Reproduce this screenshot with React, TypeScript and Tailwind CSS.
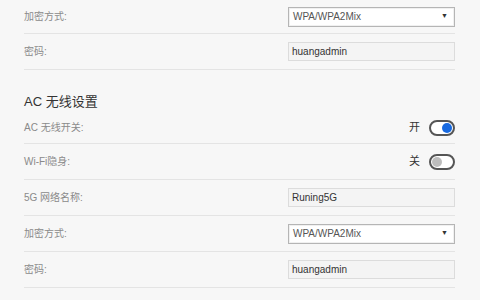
import React from "react";

const font = { fontFamily: '"Liberation Sans", "Noto Sans CJK SC", sans-serif' };

function Row({ label, h, children }: { label: string; h: string; children?: React.ReactNode }) {
  return (
    <div className={`flex items-center justify-between border-b border-[#e4e4e4] ${h}`}>
      <span className="text-[10px] text-[#8a8a8a]">{label}</span>
      {children}
    </div>
  );
}

function Select({ value }: { value: string }) {
  return (
    <div className="flex h-[20px] w-[167px] items-center justify-between border border-[#b5b5b5] bg-white pl-[4px] pr-[6px] text-[10px] text-[#555] shadow-[inset_0_0_0_1px_#f0f0f0]">
      <span>{value}</span>
      <span className="text-[7px] text-[#333]">▼</span>
    </div>
  );
}

function Input({ value }: { value: string }) {
  return (
    <div className="flex h-[19px] w-[167px] items-center border border-[#dcdcdc] bg-[#f4f4f4] pl-[3px] text-[10px] text-[#333]">
      {value}
    </div>
  );
}

function Toggle({ on, text }: { on: boolean; text: string }) {
  return (
    <div className="flex items-center gap-[9px]">
      <span className="text-[11px] text-[#333]">{text}</span>
      <div
        className={`flex h-[16px] w-[26px] items-center rounded-full border-2 border-[#555] bg-white px-[1px] ${
          on ? "justify-end" : "justify-start"
        }`}
      >
        <div className={`h-[10px] w-[10px] rounded-full ${on ? "bg-[#1769e0]" : "bg-[#bdbdbd]"}`} />
      </div>
    </div>
  );
}

export default function App() {
  return (
    <div className="h-[300px] w-[480px] overflow-hidden bg-[#f7f7f7]" style={font}>
      <div className="w-[431px] ml-[24px]">
        <Row label="加密方式:" h="h-[34px]">
          <Select value="WPA/WPA2Mix" />
        </Row>
        <Row label="密码:" h="h-[36px]">
          <Input value="huangadmin" />
        </Row>
        <div className="flex h-[42px] items-end pb-[1px]">
          <span className="text-[13px] text-[#333]">AC 无线设置</span>
        </div>
        <Row label="AC 无线开关:" h="h-[32px]">
          <Toggle on text="开" />
        </Row>
        <Row label="Wi-Fi隐身:" h="h-[36px]">
          <Toggle on={false} text="关" />
        </Row>
        <Row label="5G 网络名称:" h="h-[36px]">
          <Input value="Runing5G" />
        </Row>
        <Row label="加密方式:" h="h-[36px]">
          <Select value="WPA/WPA2Mix" />
        </Row>
        <Row label="密码:" h="h-[36px]">
          <Input value="huangadmin" />
        </Row>
      </div>
    </div>
  );
}
